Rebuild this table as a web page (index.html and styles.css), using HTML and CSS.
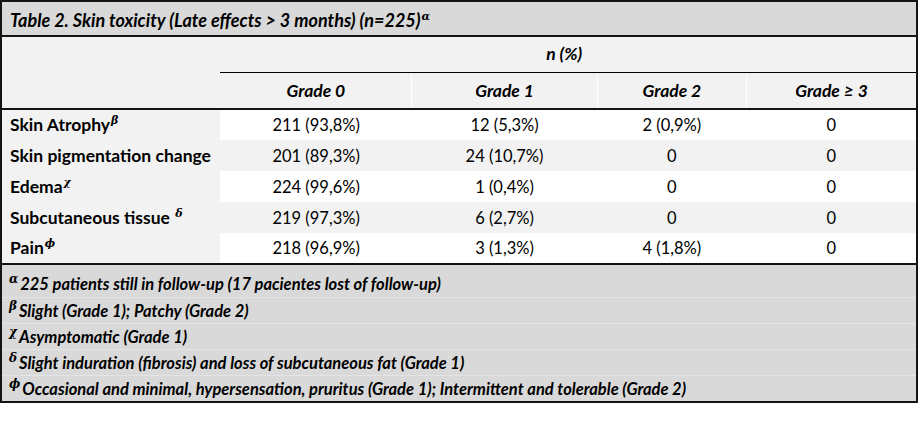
FILE: index.html
```html
<!DOCTYPE html>
<html lang="en">
<head>
<meta charset="utf-8">
<title>Table 2. Skin toxicity</title>
<link rel="stylesheet" href="styles.css">
</head>
<body>
<table class="tox">
  <colgroup>
    <col class="c-label">
    <col class="c-g0">
    <col class="c-g1">
    <col class="c-g2">
    <col class="c-g3">
  </colgroup>
  <thead>
    <tr class="r-title">
      <th colspan="5" class="title">Table 2. Skin toxicity (Late effects &gt; 3 months) (n=225)<sup class="sym">α</sup></th>
    </tr>
    <tr class="r-n">
      <th class="blank"></th>
      <th colspan="4" class="n-head">n (%)</th>
    </tr>
    <tr class="r-grade">
      <th class="blank"></th>
      <th class="grade">Grade 0</th>
      <th class="grade sep">Grade 1</th>
      <th class="grade sep">Grade 2</th>
      <th class="grade sep">Grade ≥ 3</th>
    </tr>
  </thead>
  <tbody class="data">
    <tr class="odd">
      <th class="label">Skin Atrophy<sup class="sym">β</sup></th>
      <td>211 (93,8%)</td><td>12 (5,3%)</td><td>2 (0,9%)</td><td>0</td>
    </tr>
    <tr class="even">
      <th class="label">Skin pigmentation change</th>
      <td>201 (89,3%)</td><td>24 (10,7%)</td><td>0</td><td>0</td>
    </tr>
    <tr class="odd">
      <th class="label">Edema<sup class="sym">χ</sup></th>
      <td>224 (99,6%)</td><td>1 (0,4%)</td><td>0</td><td>0</td>
    </tr>
    <tr class="even">
      <th class="label">Subcutaneous tissue <sup class="sym">δ</sup></th>
      <td>219 (97,3%)</td><td>6 (2,7%)</td><td>0</td><td>0</td>
    </tr>
    <tr class="odd last">
      <th class="label">Pain<sup class="sym">ϕ</sup></th>
      <td>218 (96,9%)</td><td>3 (1,3%)</td><td>4 (1,8%)</td><td>0</td>
    </tr>
  </tbody>
  <tfoot class="notes">
    <tr class="first"><td colspan="5"><sup class="sym">α</sup>225 patients still in follow-up (17 pacientes lost of follow-up)</td></tr>
    <tr><td colspan="5"><sup class="sym">β</sup>Slight (Grade 1); Patchy (Grade 2)</td></tr>
    <tr><td colspan="5"><sup class="sym">χ</sup>Asymptomatic (Grade 1)</td></tr>
    <tr><td colspan="5"><sup class="sym">δ</sup>Slight induration (fibrosis) and loss of subcutaneous fat (Grade 1)</td></tr>
    <tr class="final"><td colspan="5"><sup class="sym">ϕ</sup>Occasional and minimal, hypersensation, pruritus (Grade 1); Intermittent and tolerable (Grade 2)</td></tr>
  </tfoot>
</table>
</body>
</html>
```
FILE: styles.css
```css
html, body {
  margin: 0;
  padding: 0;
  background: #ffffff;
}

body {
  font-family: Lato, "Open Sans", "Liberation Sans", sans-serif;
  font-size: 16.5px;
  color: #000;
}

.tox {
  border-collapse: collapse;
  table-layout: fixed;
  width: 918px;
  border: 2px solid #141414;
}

.c-label { width: 219px; }
.c-g0 { width: 191px; }
.c-g1 { width: 185px; }
.c-g2 { width: 149px; }
.c-g3 { width: 170px; }

.tox th,
.tox td {
  padding: 0;
  line-height: 20px;
}

/* title */
.r-title th {
  height: 30px;
  background: #d9d9d9;
  text-align: left;
  padding: 3px 0 0 8px;
  font-size: 18px;
  font-weight: 700;
  font-style: italic;
  border-bottom: 2px solid #141414;
}

/* header rows */
.r-n th {
  height: 33px;
  background: #f2f2f2;
  font-size: 17.5px;
  font-weight: 700;
  font-style: italic;
  text-align: center;
}

.r-n .n-head {
  border-bottom: 1px solid #000;
  padding: 0 8px 2px 0;
}

.r-grade th {
  height: 35px;
  background: #f2f2f2;
  font-size: 17.5px;
  font-weight: 700;
  font-style: italic;
  text-align: center;
  border-bottom: 2px solid #141414;
}

.r-grade .sep {
  border-left: 1px solid #ffffff;
}

/* data */
.data th.label {
  background: #f2f2f2;
  text-align: left;
  padding-left: 8px;
  font-size: 17.5px;
  font-weight: 700;
  white-space: nowrap;
}

.data tr {
  height: 31px;
}

.data td {
  text-align: center;
  font-weight: 400;
}

.data tr.odd td { background: #ffffff; }
.data tr.even td { background: #f2f2f2; }

.data tr.last th,
.data tr.last td {
  border-bottom: 2px solid #141414;
}

/* superscript symbols */
.sym {
  font-family: "DejaVu Serif", "Liberation Serif", serif;
  font-weight: 700;
  font-style: italic;
  font-size: 11px;
  line-height: 0;
  vertical-align: 7px;
  margin-left: 1px;
}

/* footnotes */
.notes td {
  height: 25px;
  background: #d9d9d9;
  text-align: left;
  padding-left: 7px;
  font-weight: 700;
  font-style: italic;
  border-bottom: 1px solid #e4e4e4;
  white-space: nowrap;
}

.notes tr.first td {
  height: 27px;
  padding-top: 5px;
}

.notes td .sym {
  font-size: 12px;
  margin-left: 0;
  margin-right: 2px;
}

.notes tr.final td {
  border-bottom: 2px solid #141414;
}
```
